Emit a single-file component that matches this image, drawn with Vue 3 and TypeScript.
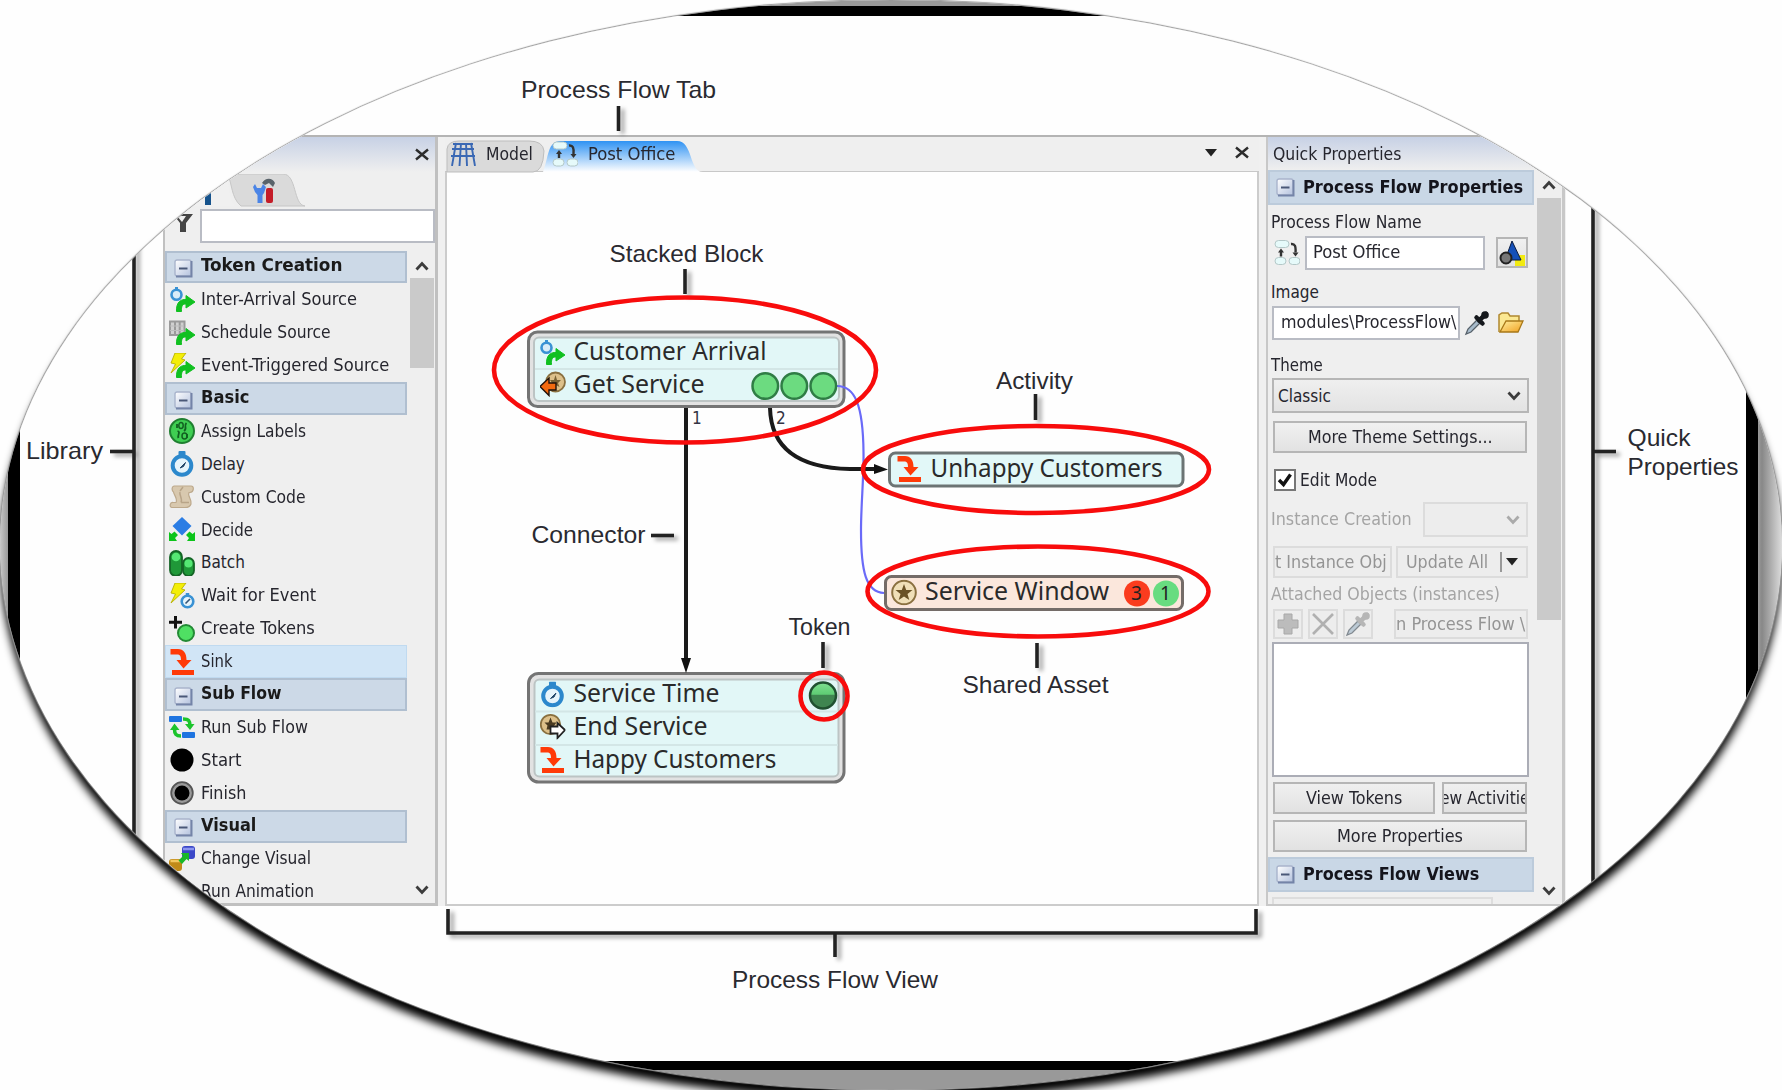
<script setup lang="ts">
interface Entry { kind: 'head' | 'item'; text: string; w: number; icon?: string; active?: boolean }
interface Label { text: string; x: number; y: number; w: number }

// Stretches a run of text to a fixed width in pixels.
const vFit = {
  mounted(el: HTMLElement, binding: { value: number }) {
    el.style.display = 'inline-block'
    const natural = el.offsetWidth
    el.style.transformOrigin = '0 50%'
    el.style.transform = `scaleX(${binding.value / natural})`
    el.style.marginRight = `${binding.value - natural}px`
  },
}

const library: Entry[] = [
  { kind: 'head', text: 'Token Creation', w: 141 },
  { kind: 'item', text: 'Inter-Arrival Source', w: 156, icon: 'arrival' },
  { kind: 'item', text: 'Schedule Source', w: 130, icon: 'schedule' },
  { kind: 'item', text: 'Event-Triggered Source', w: 188, icon: 'event' },
  { kind: 'head', text: 'Basic', w: 48 },
  { kind: 'item', text: 'Assign Labels', w: 105, icon: 'assign' },
  { kind: 'item', text: 'Delay', w: 44, icon: 'delay' },
  { kind: 'item', text: 'Custom Code', w: 105, icon: 'scroll' },
  { kind: 'item', text: 'Decide', w: 52, icon: 'decide' },
  { kind: 'item', text: 'Batch', w: 44, icon: 'batch' },
  { kind: 'item', text: 'Wait for Event', w: 115, icon: 'wait' },
  { kind: 'item', text: 'Create Tokens', w: 114, icon: 'create' },
  { kind: 'item', text: 'Sink', w: 32, icon: 'sink', active: true },
  { kind: 'head', text: 'Sub Flow', w: 81 },
  { kind: 'item', text: 'Run Sub Flow', w: 107, icon: 'subflow' },
  { kind: 'item', text: 'Start', w: 40, icon: 'start' },
  { kind: 'item', text: 'Finish', w: 45, icon: 'finish' },
  { kind: 'head', text: 'Visual', w: 55 },
  { kind: 'item', text: 'Change Visual', w: 110, icon: 'visual' },
  { kind: 'item', text: 'Run Animation', w: 113 },
]

const labels: Label[] = [
  { text: 'Process Flow Tab', x: 521, y: 97.5, w: 195 },
  { text: 'Stacked Block', x: 609.5, y: 262, w: 154 },
  { text: 'Activity', x: 996, y: 388.5, w: 77 },
  { text: 'Shared Asset', x: 962.5, y: 693, w: 146 },
  { text: 'Token', x: 788.5, y: 635, w: 62 },
  { text: 'Connector', x: 531.5, y: 543, w: 114 },
  { text: 'Library', x: 26, y: 459, w: 77 },
  { text: 'Quick', x: 1627.5, y: 446, w: 63 },
  { text: 'Properties', x: 1627.5, y: 474.5, w: 111 },
  { text: 'Process Flow View', x: 732, y: 988, w: 206 },
]

const nodeTexts: Label[] = [
  { text: 'Customer Arrival', x: 573.5, y: 359.5, w: 193 },
  { text: 'Get Service', x: 573.5, y: 392.5, w: 131 },
  { text: 'Unhappy Customers', x: 930.5, y: 476.5, w: 232 },
  { text: 'Service Window', x: 925, y: 600, w: 184 },
  { text: 'Service Time', x: 573.5, y: 702, w: 146 },
  { text: 'End Service', x: 573.5, y: 735, w: 134 },
  { text: 'Happy Customers', x: 573.5, y: 768, w: 203 },
]

const leaders = [
  'M618.5 106V131', 'M685 269V294', 'M1035.5 394V420', 'M1037 643V668', 'M823 642V668',
  'M651 535.5H674', 'M110 451.5H134', 'M134 200V860', 'M1593 451.5H1616', 'M1593 190V900',
  'M835 932V957', 'M448 909V933H1256V909',
]
</script>

<template>
  <div class="stage">
    <svg width="0" height="0" class="defs">
      <defs>
        <linearGradient id="gBox" x1="0" y1="0" x2="1" y2="1"><stop offset="0" stop-color="#fff" /><stop offset="1" stop-color="#b4c2de" /></linearGradient>
        <linearGradient id="gTok" x1="0" y1="0" x2="0" y2="1"><stop offset="0" stop-color="#7fe090" /><stop offset=".45" stop-color="#5fcc74" /><stop offset=".5" stop-color="#3f8550" /><stop offset="1" stop-color="#3f8550" /></linearGradient>
        <linearGradient id="gTab" x1="0" y1="0" x2="0" y2="1"><stop offset="0" stop-color="#2f92f3" /><stop offset="1" stop-color="#fff" /></linearGradient>
        <linearGradient id="gFold" x1="0" y1="0" x2="1" y2="1"><stop offset="0" stop-color="#fff0a0" /><stop offset="1" stop-color="#f0a020" /></linearGradient>
        <symbol id="minus" viewBox="0 0 19 19"><rect x="1" y="1" width="16" height="16" rx="2" fill="url(#gBox)" stroke="#a9b4cc" stroke-width="1.400" /><path d="M17.500 2V17.500H2" fill="none" stroke="#7484a8" stroke-width="2" /><path d="M5 9.500H13.500" stroke="#4a5878" stroke-width="2" /></symbol>
        <symbol id="garrow" viewBox="0 0 26 26"><path d="M7.500 24.500C7 15 12 12 17 12.500V8.500L26 15L17 21V17C13.500 16.500 12 19.500 12.500 24.500Z" fill="#10c020" stroke="#10c020" stroke-width="1" /></symbol>
        <symbol id="bolt" viewBox="0 0 26 26"><path d="M6 0H17L12.500 6L16 7L2 20L6.500 11L2 10Z" fill="#f3ee08" stroke="#b8b000" stroke-width=".9" /></symbol>
        <symbol id="arrival" viewBox="0 0 26 26"><circle cx="7.500" cy="7.800" r="5" fill="#d9ecf8" stroke="#3a92d4" stroke-width="2.600" /><path d="M7.500 0V3" stroke="#3a92d4" stroke-width="3" /><use href="#garrow" width="26" height="26" /></symbol>
        <symbol id="schedule" viewBox="0 0 26 26"><path d="M1 1.500H15.500V15H1ZM6 1.500V15M10.700 1.500V15" fill="#d0d0d0" stroke="#9a9a9a" stroke-width="2" /><path d="M1 6H15M1 10.500H15" stroke="#bcbcbc" /><use href="#garrow" width="26" height="26" /></symbol>
        <symbol id="event" viewBox="0 0 26 26"><use href="#bolt" width="26" height="26" /><use href="#garrow" width="26" height="26" /></symbol>
        <symbol id="assign" viewBox="0 0 26 26"><circle cx="13" cy="13" r="12" fill="#3fce52" stroke="#1f7f30" stroke-width="2" /><path d="M8 6V10M18 16V20M8.500 13C12 14 8 17 9.500 20M17.500 5C14 8 19 10 15 13" stroke="#116020" stroke-width="1.800" fill="none" /><ellipse cx="12" cy="7.500" rx="2.200" ry="3" fill="none" stroke="#116020" stroke-width="1.500" /><ellipse cx="15.500" cy="18" rx="2.500" ry="3" fill="none" stroke="#116020" stroke-width="1.500" /></symbol>
        <symbol id="delay" viewBox="0 0 26 26"><rect x="9.500" y="0" width="7" height="5" rx="1" fill="#2c88cc" /><circle cx="13" cy="14.500" r="9.300" fill="#e6f4fb" stroke="#2c88cc" stroke-width="4" /><path d="M11 17L16.500 11.500L14.500 15.500Z" fill="#246" stroke="#246" stroke-width="1" /></symbol>
        <symbol id="scroll" viewBox="0 0 26 26"><path d="M5 2H22C25.500 2 25 8 21 8.500H20C18 12 23 15 22 20C21 23 18 23.500 16 23.500H3C0 23 1 18 4 18.500H7C9 15 5 11 4.500 8C3 7 2 3 5 2Z" fill="#d8c8ae" stroke="#bda98c" stroke-width="1.200" /><path d="M11 7L14 3M12 18.500H20M11 8C10 11 14 15 12 18.500" fill="none" stroke="#b8a488" stroke-width="1.500" /></symbol>
        <symbol id="decide" viewBox="0 0 26 26"><path d="M13 0L22.500 9L13 18.500L3.500 9Z" fill="#2b7de4" /><path d="M0 15L2.500 17L5.500 14.500L9 18L6 21L8 24H0ZM26 15L23.500 17L20.500 14.500L17 18L20 21L18 24H26Z" fill="#0cc41a" /></symbol>
        <symbol id="batch" viewBox="0 0 26 26"><rect x="1" y="1" width="12" height="25" rx="6" fill="#1f9838" stroke="#146526" stroke-width="1.800" /><circle cx="7" cy="7" r="4.300" fill="#55e874" /><rect x="14" y="8" width="11" height="18" rx="5.500" fill="#1f9838" stroke="#146526" stroke-width="1.800" /><circle cx="19.500" cy="13.500" r="4" fill="#55e874" /></symbol>
        <symbol id="wait" viewBox="0 0 26 26"><use href="#bolt" width="26" height="26" /><circle cx="18.500" cy="18.500" r="5.800" fill="#e6f4fb" stroke="#3a92d4" stroke-width="2.600" /><path d="M18.500 10V13" stroke="#3a92d4" stroke-width="3.500" /><path d="M16.500 20.500L21 16" stroke="#357" stroke-width="1.600" /></symbol>
        <symbol id="create" viewBox="0 0 26 26"><path d="M6.500 0V12.500M0 6.300H13" stroke="#111" stroke-width="3" /><circle cx="17" cy="17" r="8" fill="#4fe063" stroke="#238a35" stroke-width="2" /></symbol>
        <symbol id="sink" viewBox="0 0 26 26"><path d="M1.500 0H9C14.500 0 17.500 4 17.500 11H22.500L14.500 19.500L7.500 11H12C12 7 11 5.500 8 5.500H1.500Z" fill="#ff3a08" /><rect x="3" y="21" width="22" height="5" fill="#ff3a08" /></symbol>
        <symbol id="subflow" viewBox="0 0 26 26"><rect x="0" y="2" width="13" height="6" rx="1" fill="#1f74e0" /><rect x="13" y="18" width="13" height="6" rx="1" fill="#1f74e0" /><path d="M14 5C20 5 21 7 21 12M12 22C7 22 5.500 20 5.500 15" fill="none" stroke="#1cc42c" stroke-width="3.600" /><path d="M16 10H25.500L21 16ZM1 16H10.500L5.500 9.500Z" fill="#1cc42c" /></symbol>
        <symbol id="start" viewBox="0 0 26 26"><circle cx="13" cy="13" r="11.500" /></symbol>
        <symbol id="finish" viewBox="0 0 26 26"><circle cx="13" cy="13" r="10.800" fill="#9a9a9a" stroke="#555" stroke-width="1.800" /><circle cx="13" cy="13" r="7.500" /></symbol>
        <symbol id="visual" viewBox="0 0 26 26"><rect x="13" y="0" width="13" height="13" rx="3" fill="#3c48c8" /><path d="M14 3H25" stroke="#8c96f0" stroke-width="2.500" /><rect x="0" y="13" width="13" height="12" rx="3" fill="#c08a18" /><path d="M1.500 15H11.500" stroke="#f2c860" stroke-width="2.500" /><path d="M12 7H20V15L17.500 13L13 18L9.500 14.500L14 10Z" fill="#18b828" /></symbol>
        <symbol id="star" viewBox="0 0 26 26"><circle cx="13" cy="13" r="11.800" fill="#f0dfb8" stroke="#8a7040" stroke-width="2" /><path d="M13 4.500L15.200 10.500H21.500L16.500 14.500L18.300 20.500L13 17L7.700 20.500L9.500 14.500L4.500 10.500H10.800Z" fill="#6b5226" /></symbol>
        <symbol id="getsvc" viewBox="0 0 26 26"><circle cx="15.500" cy="11" r="9.500" fill="#ddc08a" stroke="#8a7040" stroke-width="1.800" /><path d="M15.500 4L17 9H21L18 12L19.500 16L12 12L10 9H14Z" fill="#7a6234" /><path d="M0 15.500L9 7V12H16V19H9V24.500Z" fill="#f26a10" stroke="#201008" stroke-width="1.400" /></symbol>
        <symbol id="endsvc" viewBox="0 0 26 26"><circle cx="11" cy="11" r="9.700" fill="#ddc08a" stroke="#8a7040" stroke-width="1.800" /><path d="M11 4L13 9H17L14 13L12 16H7L8 12L5 9H9Z" fill="#4a3a20" /><path d="M25.500 16.500L18 9.500V13H11V20H18V24.500Z" fill="#fff" stroke="#222" stroke-width="1.800" /></symbol>
        <symbol id="flow" viewBox="0 0 26 26"><rect x="1" y="1" width="14" height="7" rx="3.500" fill="#e6fafa" stroke="#b4c8c8" /><rect x="1" y="18" width="11" height="7" rx="3.500" fill="#e6fafa" stroke="#b4c8c8" /><rect x="15" y="18" width="11" height="7" rx="3.500" fill="#e6fafa" stroke="#b4c8c8" /><path d="M7 17V11M17 4.500C21 4 22 7 21.500 13" stroke="#333" stroke-width="2.400" fill="none" /><path d="M4 13L7 9L10 13ZM18.500 13H24.500L21.500 17Z" fill="#333" /></symbol>
        <symbol id="dropper" viewBox="0 0 26 26"><path d="M2 24L4 19L13 10L16 13L7 22Z" fill="#a8bccc" stroke="#56616a" stroke-width="1.300" /><path d="M12.500 7.500L18.500 13.500M15 10.500L22 4" stroke="currentColor" stroke-width="4.500" stroke-linecap="round" /><circle cx="21" cy="5" r="3.800" fill="currentColor" /></symbol>
      </defs>
    </svg>

    <div class="frame">
      <div class="paper">
        <main class="window">
          <aside class="panel library">
            <header class="caption"><svg class="close" viewBox="0 0 14 12"><path d="M1 1L13 11M13 1L1 11" /></svg></header>
            <div class="tooltabs">
              <svg width="270" height="34"><path d="M0 32H70C62 26 66 2 58 0H0Z" fill="#f0f0f0" /><path d="M63 2Q68 0 76 0H118C132 0 128 31 140 32H76C66 24 67 8 63 2Z" fill="#dadada" stroke="#c6c6c6" /><path d="M40 31V22L46 15V31Z" fill="#16538c" /><path d="M90 10L92 14H96L98 10L101 13L99 19L97.500 21V29H92.500V21L90 18L88 13Z" fill="#4a84e6" /><path d="M97 9C100 4 107 3 110 9L108 13L104 9L100 11Z" fill="#59636a" /><rect x="101" y="14" width="7" height="15" rx="2" fill="#c41c28" /></svg>
            </div>
            <div class="search">
              <svg width="22" height="22" viewBox="0 0 22 22"><path d="M1 2H21L14 11V20H8V11Z" fill="#444" /><path d="M5 4H14L10 10Z" fill="#f0f0f0" /></svg>
              <div class="field"></div>
            </div>
            <div class="listwrap">
              <div class="list">
                <div v-for="e in library" :key="e.text" class="row" :class="[e.kind, { active: e.active }]">
                  <svg v-if="e.kind === 'head'" class="minus"><use href="#minus" /></svg>
                  <svg v-else class="ico"><use v-if="e.icon" :href="'#' + e.icon" /></svg>
                  <span v-fit="e.w">{{ e.text }}</span>
                </div>
              </div>
              <div class="scroll">
                <svg viewBox="0 0 14 10"><path d="M1.500 8.500L7 2.500L12.500 8.500" /></svg>
                <i class="thumb"></i>
                <svg class="down" viewBox="0 0 14 10"><path d="M1.500 1.500L7 7.500L12.500 1.500" /></svg>
              </div>
            </div>
          </aside>

          <section class="view">
            <div class="tabs">
              <svg class="tabshape" width="813" height="36"><path d="M2 35V12Q3 4 14 4H84Q98 4 99 14Q98 35 88 35Z" fill="#dadada" stroke="#bdbdbd" /><path d="M98 35C104 20 102 4 116 4H232C248 4 244 35 258 35Z" fill="url(#gTab)" /></svg>
              <div class="tab model"><svg width="26" height="24" viewBox="0 0 26 24"><path d="M3 2H23M2 7H24M1 14H25M6 1L2 24M11 1L9.500 24M16 1L17 24M21 1L25 24" stroke="#3a68b4" stroke-width="1.900" fill="none" /></svg><span v-fit="47">Model</span></div>
              <div class="tab office"><svg width="26" height="26"><use href="#flow" /></svg><span v-fit="87">Post Office</span></div>
              <svg class="tri" viewBox="0 0 12 8"><path d="M0 0H12L6 7.500Z" /></svg>
              <svg class="close" viewBox="0 0 14 12"><path d="M1 1L13 11M13 1L1 11" /></svg>
            </div>
            <div class="canvas"></div>
          </section>

          <aside class="panel props">
            <header class="caption"><span v-fit="128">Quick Properties</span></header>
            <div class="propwrap">
              <div class="fields">
                <div class="bar"><svg class="minus"><use href="#minus" /></svg><span v-fit="220">Process Flow Properties</span></div>
                <div class="lab l1"><span v-fit="151">Process Flow Name</span></div>
                <div class="line name"><svg width="26" height="27"><use href="#flow" /></svg><div class="field"><span v-fit="87">Post Office</span></div>
                  <div class="btn pick"><svg width="26" height="26" viewBox="0 0 26 26"><rect x="16" y="15" width="10" height="11" fill="#f2ea10" /><path d="M13 1L22 20H6Z" fill="#1450b8" stroke="#0a1c40" /><circle cx="7" cy="18" r="5.500" fill="#777" stroke="#222" stroke-width="2" /></svg></div></div>
                <div class="lab l2"><span v-fit="48">Image</span></div>
                <div class="line image"><div class="field"><span v-fit="175">modules\ProcessFlow\</span></div><svg class="drop" width="26" height="26"><use href="#dropper" /></svg>
                  <svg width="26" height="22" viewBox="0 0 26 22"><path d="M1 20V3L4 1H10L12 4H21V9" fill="#fbe892" stroke="#b08830" stroke-width="1.500" /><path d="M2 20L8 9H25L20 20Z" fill="url(#gFold)" stroke="#a87818" stroke-width="1.300" /></svg></div>
                <div class="lab l3"><span v-fit="52">Theme</span></div>
                <div class="select theme"><span v-fit="53">Classic</span><svg viewBox="0 0 14 10"><path d="M1.500 1.500L7 7.500L12.500 1.500" /></svg></div>
                <div class="btn more"><span v-fit="185">More Theme Settings...</span></div>
                <div class="check"><svg width="22" height="22" viewBox="0 0 22 22"><rect x="1" y="1" width="20" height="20" fill="#fff" stroke="#777" stroke-width="2" /><path d="M5 11L9.500 15.500L16.500 5.500" fill="none" stroke="#111" stroke-width="3.400" /></svg><span v-fit="77">Edit Mode</span></div>
                <div class="line inst"><span v-fit="141">Instance Creation</span><div class="select off"><svg viewBox="0 0 14 10"><path d="M1.500 1.500L7 7.500L12.500 1.500" /></svg></div></div>
                <div class="line upd"><div class="btn off a"><span v-fit="112">t Instance Obj</span></div><div class="btn off b"><span v-fit="82">Update All</span><i></i><svg class="tri" viewBox="0 0 12 8"><path d="M0 0H12L6 7.500Z" /></svg></div></div>
                <div class="lab l4"><span v-fit="229">Attached Objects (instances)</span></div>
                <div class="line att">
                  <div class="btn off"><svg width="22" height="22" viewBox="0 0 22 22"><path d="M7 1H15V7H21V15H15V21H7V15H1V7H7Z" fill="#bcbcbc" stroke="#a8a8a8" /></svg></div>
                  <div class="btn off"><svg width="22" height="22" viewBox="0 0 22 22"><path d="M1 1L21 21M21 1L1 21" stroke="#b0b0b0" stroke-width="2.600" /></svg></div>
                  <div class="btn off"><svg width="26" height="26" class="dim"><use href="#dropper" /></svg></div>
                  <div class="btn off w"><span v-fit="129">n Process Flow \</span></div>
                </div>
                <div class="box"></div>
                <div class="line tok"><div class="btn v"><span v-fit="96">View Tokens</span></div><div class="btn u"><span v-fit="90">ew Activitie</span></div></div>
                <div class="btn mp"><span v-fit="126">More Properties</span></div>
                <div class="bar two"><svg class="minus"><use href="#minus" /></svg><span v-fit="176">Process Flow Views</span></div>
                <div class="stub"></div>
              </div>
              <div class="scroll">
                <svg viewBox="0 0 14 10"><path d="M1.500 8.500L7 2.500L12.500 8.500" /></svg>
                <i class="thumb"></i>
                <svg class="down" viewBox="0 0 14 10"><path d="M1.500 1.500L7 7.500L12.500 1.500" /></svg>
              </div>
            </div>
          </aside>
        </main>
      </div>

      <svg class="diagram" width="1782" height="1090" viewBox="0 0 1782 1090">
        <g class="leaders"><path v-for="d in leaders" :key="d" :d="d" /></g>

        <rect x="528.500" y="332" width="315.500" height="74.500" rx="9" class="shell" />
        <rect x="534" y="337.500" width="305" height="63.500" rx="5" class="core" />
        <rect x="528.500" y="673.500" width="315.500" height="108.500" rx="10" class="shell" />
        <rect x="534.500" y="679.500" width="304" height="97" rx="5" class="core" />
        <path d="M535 369H838M535 711.500H838M535 745H838" stroke="#d3e6e6" stroke-width="2" />

        <path d="M686 408V662M770 408C771 448 798 468 850 469H876" class="link" />
        <path d="M681 658H691L686 673ZM874 464V474L888 469.500Z" fill="#111" />
        <path d="M837 386C855 386 863 405 863.500 452C864 475 861 505 861 530C861 572 866 592 884 593" fill="none" stroke="#6a6af8" stroke-width="2.200" />

        <rect x="889.500" y="453" width="293.500" height="33" rx="6" fill="#e2f8f8" stroke="#6c7474" stroke-width="3" />
        <rect x="885.500" y="576.500" width="297" height="33" rx="6" fill="#fbe7dc" stroke="#746c68" stroke-width="3" />

        <g stroke="#2f7d45" stroke-width="2.500" fill="#6cdb80"><circle cx="765.300" cy="386" r="12.800" /><circle cx="794.300" cy="386" r="12.800" /><circle cx="823.300" cy="386" r="12.800" /></g>
        <circle cx="823" cy="695.500" r="13" fill="url(#gTok)" stroke="#205030" stroke-width="2.500" />
        <circle cx="1137" cy="593.500" r="13" fill="#fa3c1e" /><circle cx="1166" cy="593.500" r="13" fill="#68dc80" />

        <use href="#arrival" x="539" y="340" width="26" height="26" /><use href="#getsvc" x="540" y="371" width="26" height="26" />
        <use href="#sink" x="896" y="456" width="26" height="26" /><use href="#star" x="891" y="579.500" width="26" height="26" />
        <use href="#delay" x="539.500" y="681.500" width="26" height="26" /><use href="#endsvc" x="539.500" y="713.500" width="26" height="26" /><use href="#sink" x="539" y="747" width="26" height="26" />

        <g class="nodetext"><text v-for="t in nodeTexts" :key="t.text" :x="t.x" :y="t.y" :textLength="t.w" lengthAdjust="spacingAndGlyphs">{{ t.text }}</text></g>
        <g class="digits"><text x="692" y="424">1</text><text x="776" y="424">2</text><text x="1131" y="599.500" class="d">3</text><text x="1160" y="599.500" class="d">1</text></g>

        <g fill="none" stroke="#f80c0c" stroke-width="4.600"><ellipse cx="685" cy="370" rx="191" ry="72.500" /><ellipse cx="1036" cy="469.500" rx="173" ry="43.500" /><ellipse cx="1038" cy="591.500" rx="170.500" ry="45" /><circle cx="824" cy="696" r="23.500" /></g>

        <g class="labels"><text v-for="t in labels" :key="t.text" :x="t.x" :y="t.y" :textLength="t.w" lengthAdjust="spacingAndGlyphs">{{ t.text }}</text></g>
      </svg>
    </div>
  </div>
</template>

<style>
body { margin: 0; background: #fefefe; overflow: hidden; }
</style>

<style scoped>
* { box-sizing: border-box; }
.stage { position: relative; width: 1782px; height: 1090px; overflow: hidden; background: #fefefe; font: 17px/20px "DejaVu Sans Condensed", "DejaVu Sans", sans-serif; color: #26262e; white-space: nowrap; }
.defs { position: absolute; }
span { flex: none; }
svg { flex: none; display: block; }
.frame { position: relative; width: 1782px; height: 1090px; border-radius: 50%; overflow: hidden; padding: 6px 24px 20px 8px; background: linear-gradient(90deg, #c8c8c8, #999 8px, #999 1758px, #888 1762px, #ddd); box-shadow: 0 0 1px 1px #999, 0 10px 8px 0 #000; }
.paper { width: 1750px; height: 1064px; background: #fefefe; border: solid #000; border-width: 10px 12px 9px; padding: 119px 0 0 143px; }
.window { display: flex; width: 1403px; height: 771px; border-top: 2px solid #b4b4b4; background: #f0f0f0; }
.panel { background: #efefef; height: 769px; }
.library { width: 275px; border: solid #c0c0c0; border-width: 0 3px 3px 2px; margin-right: 7px; overflow: hidden; }
.caption { height: 35px; background: linear-gradient(#c7d1e5, #efefef); display: flex; align-items: center; }
.library .caption { justify-content: flex-end; padding-right: 6px; }
.close { width: 14px; height: 13px; }
.close path { stroke: #2c2c2c; stroke-width: 2.4; fill: none; }
.tooltabs { height: 34px; margin-top: 2px; }
.search { display: flex; height: 35px; align-items: center; padding-left: 8px; gap: 5px; }
.field { background: #fff; border: 2px solid #b9bcc4; height: 34px; display: flex; align-items: center; overflow: hidden; }
.search svg { margin-top: -6px; margin-left: -1px; margin-right: 1px; }
.search .field { width: 235px; }
.listwrap { display: flex; margin-top: 7.5px; height: 653px; }
.list { width: 242px; overflow: hidden; }
.row { height: 32.9px; display: flex; align-items: center; padding-left: 4px; }
.row span { margin-top: -1px; }
.ico { width: 26px; height: 26px; margin-right: 6px; }
.minus { width: 19px; height: 19px; }
.row.head { background: #ccd9e7; border: 2px solid #b0bfd0; padding-left: 7px; font-weight: 700; color: #1a1a1a; }
.row.head .minus { margin-right: 8px; margin-top: 3px; }
.row.head span { margin-top: -3px; }
.row.active { background: #d1e5f6; border: 1px solid #c0daf0; padding-left: 3px; }
.scroll { width: 26px; margin-left: 2px; display: flex; flex-direction: column; align-items: center; }
.scroll svg, .select svg { width: 14px; height: 10px; fill: none; stroke: #3c3c3c; stroke-width: 2.8; }
.scroll .down { margin-top: auto; }
.thumb { display: block; background: #cacaca; width: 24px; }
.library .scroll { padding: 10px 0 9px; }
.library .thumb { height: 90px; margin-top: 7px; }
.view { width: 814px; margin-right: 7px; height: 769px; }
.tabs { position: relative; height: 35px; display: flex; align-items: center; padding-right: 10px; background: #efefef; border-bottom: 1px solid #c8c8c8; }
.tabshape { position: absolute; left: 0; top: 0; }
.tab { position: relative; display: flex; align-items: center; }
.model { margin-left: 5px; gap: 10px; }
.office { margin-left: 19px; gap: 10px; }
.tri { width: 12px; height: 8px; fill: #222; }
.tabs .tri { margin-left: auto; margin-right: 18px; margin-top: -3px; }
.tabs .close { margin-top: -3px; }
.canvas { height: 734px; background: #fefefe; border: 2px solid #ccc; border-top: 0; }
.props { width: 299px; border: solid #c8c8c8; border-width: 0 3px 2px 2px; overflow: hidden; }
.props .caption { height: 33px; padding-left: 5px; }
.propwrap { display: flex; height: 735px; }
.fields { width: 266px; overflow: hidden; }
.props .scroll { padding: 10px 0 9px; height: 735px; }
.props .thumb { height: 422px; margin-top: 8px; }
.bar { height: 35px; display: flex; align-items: center; padding-left: 6px; gap: 8px; background: #c9d7e6; border: 2px solid #bccbdb; font-weight: 700; color: #14141c; }
.bar span { margin-top: -2px; }
.lab { height: 20px; padding-left: 3px; }
.line { display: flex; align-items: center; }
.l1 { margin-top: 7px; }
.name { margin-top: 3px; padding-left: 6px; height: 35px; }
.name .field { width: 180px; margin-left: 5px; padding-left: 6px; }
.name .field span { margin-top: -2px; }
.btn { height: 31px; display: flex; align-items: center; justify-content: center; background: linear-gradient(#f0f0f0, #e2e2e2); border: 2px solid #b6b6b6; overflow: hidden; }
.pick { width: 32px; height: 31px; margin-left: 11px; }
.l2 { margin-top: 12px; }
.image { margin-top: 3px; padding-left: 4px; height: 35px; }
.image .field { width: 188px; padding-left: 7px; }
.image .field span { margin-top: -1px; }
.drop { margin: 0 8px 0 4px; color: #15181c; }
.l3 { margin-top: 15px; }
.select { display: flex; align-items: center; justify-content: space-between; height: 35px; border: 2px solid #b6b6b6; background: linear-gradient(#efefef, #e3e3e3); padding: 0 6px 0 4px; }
.theme { margin: 3px 0 0 4px; width: 257px; }
.more { margin: 8px 0 0 5px; width: 254px; height: 32px; }
.check { display: flex; align-items: center; gap: 4px; margin: 16px 0 0 6px; height: 22px; }
.inst { margin-top: 11px; height: 35px; padding-left: 3px; color: #a4a4a4; }
.inst span { margin-top: -1px; }
.off { background: #ededed; border-color: #dcdcdc; color: #949494; }
.select.off { width: 105px; margin-left: 11px; justify-content: flex-end; }
.select.off svg { stroke: #aaa; }
.upd { margin-top: 8px; padding-left: 5px; gap: 4px; height: 33px; }
.upd .a { width: 119px; justify-content: flex-start; height: 32px; }
.upd .b { width: 132px; height: 32px; }
.upd i { width: 2px; height: 20px; background: #999; margin: 0 4px 0 12px; }
.l4 { margin-top: 6px; color: #a4a4a4; }
.att { margin-top: 4px; padding-left: 5px; gap: 5px; height: 31px; }
.att .btn { width: 30px; height: 30px; }
.att .btn.w { width: 134px; margin-left: auto; margin-right: 6px; }
.dim { color: #a0a0a0; opacity: .7; }
.box { margin: 3px 0 0 4px; width: 257px; height: 135px; background: #fff; border: 2px solid #abadb6; }
.tok { margin-top: 5px; padding-left: 5px; gap: 7px; height: 32px; }
.tok .btn { height: 32px; }
.tok .v { width: 162px; }
.tok .u { width: 85px; }
.mp { margin: 6px 0 0 5px; width: 254px; height: 32px; }
.two { margin-top: 5px; }
.stub { width: 221px; height: 20px; margin: 5px 0 0 4px; border: 2px solid #ddd; }
.diagram { position: absolute; left: 0; top: 0; }
.leaders { fill: none; stroke: #222; stroke-width: 3.6; filter: drop-shadow(4px 3px 2px rgba(0, 0, 0, .38)); }
.shell { fill: #e2e2e2; stroke: #747474; stroke-width: 3; }
.core { fill: #e2f7f7; stroke: #bcc4c4; stroke-width: 2; }
.link { fill: none; stroke: #1a1a1a; stroke-width: 4; }
.nodetext { font: 25.5px "Noto Sans", sans-serif; fill: #2a2a2a; }
.digits { font: 17px "DejaVu Sans Condensed", sans-serif; fill: #334; }
.digits .d { font: 19px "Noto Sans", sans-serif; fill: #222; }
.labels { font: 24px "Liberation Sans", sans-serif; fill: #2a2a30; }
</style>
